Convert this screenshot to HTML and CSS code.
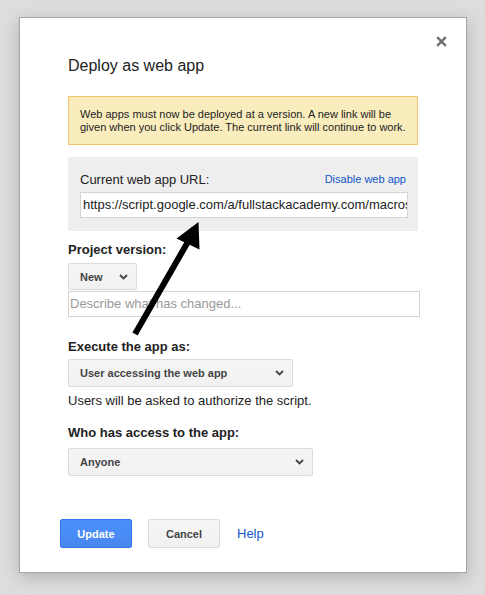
FILE: index.html
```html
<!DOCTYPE html>
<html>
<head>
<meta charset="utf-8">
<link rel="stylesheet" href="styles.css">
</head>
<body>
<div class="dialog">
  <svg class="close" viewBox="0 0 11 11" width="11" height="11"><path d="M1.2 1.2L9.8 9.8M9.8 1.2L1.2 9.8" stroke="#6f6f6f" stroke-width="2.4" fill="none"/></svg>
  <div class="content">
    <h1 class="title">Deploy as web app</h1>
    <div class="notice">Web apps must now be deployed at a version. A new link will be given when you click Update. The current link will continue to work.</div>
    <div class="urlbox">
      <div class="urlhead">
        <span class="urllabel">Current web app URL:</span>
        <a class="disable">Disable web app</a>
      </div>
      <div class="urlfield">https://script.google.com/a/fullstackacademy.com/macros/s/AKfycbx/exec</div>
    </div>
    <div class="label first">Project version:</div>
    <div class="select sel-new"><span>New</span><svg class="chev" viewBox="0 0 9 6" width="9" height="6"><path d="M1 1L4.5 4.5L8 1" stroke="#444" stroke-width="1.8" fill="none"/></svg></div>
    <div class="textinput">Describe what has changed...</div>
    <div class="label exec">Execute the app as:</div>
    <div class="select sel-exec"><span>User accessing the web app</span><svg class="chev" viewBox="0 0 9 6" width="9" height="6"><path d="M1 1L4.5 4.5L8 1" stroke="#444" stroke-width="1.8" fill="none"/></svg></div>
    <div class="hint">Users will be asked to authorize the script.</div>
    <div class="label who">Who has access to the app:</div>
    <div class="select sel-who"><span>Anyone</span><svg class="chev" viewBox="0 0 9 6" width="9" height="6"><path d="M1 1L4.5 4.5L8 1" stroke="#444" stroke-width="1.8" fill="none"/></svg></div>
    <div class="footer">
      <button class="btn primary">Update</button>
      <button class="btn">Cancel</button>
      <a class="help">Help</a>
    </div>
  </div>
</div>
<svg class="arrow" width="485" height="595" viewBox="0 0 485 595">
  <line x1="135" y1="334" x2="189" y2="240" stroke="#000" stroke-width="6"/>
  <polygon points="198.5,222 176.5,238.5 199.5,249.5" fill="#000"/>
</svg>
</body>
</html>
```
FILE: styles.css
```css
html, body {
  margin: 0;
  padding: 0;
}
body {
  background: #dddddd;
  width: 485px;
  height: 595px;
  overflow: hidden;
  padding: 17px 0 0 19px;
  box-sizing: border-box;
  font-family: Arial, "Liberation Sans", sans-serif;
  color: #222;
  position: relative;
}
.dialog {
  position: relative;
  box-sizing: border-box;
  width: 448px;
  height: 556px;
  background: #fff;
  border: 1px solid #a6a6a6;
  box-shadow: 0 4px 16px rgba(0, 0, 0, 0.2);
}
.close {
  position: absolute;
  top: 18px;
  right: 19px;
  display: block;
}
.content {
  padding: 39px 0 0 48px;
}
.title {
  margin: 0;
  font-size: 16px;
  font-weight: normal;
  line-height: 18px;
  color: #222;
}
.notice {
  margin-top: 21px;
  width: 350px;
  box-sizing: border-box;
  background: #f9edbe;
  border: 1px solid #f0c36d;
  padding: 11px 8px 10px 11px;
  font-size: 11px;
  line-height: 13px;
  color: #222;
}
.urlbox {
  margin-top: 12px;
  width: 350px;
  box-sizing: border-box;
  background: #eeeeee;
  padding: 15px 10px 13px 12px;
}
.urlhead {
  display: flex;
  justify-content: space-between;
  align-items: center;
  height: 16px;
  margin-bottom: 4px;
}
.urllabel {
  font-size: 13px;
  line-height: 16px;
}
.disable {
  font-size: 11px;
  color: #1155cc;
  margin-top: -3px;
  margin-right: 2px;
}
.urlfield {
  height: 26px;
  box-sizing: border-box;
  background: #fff;
  border: 1px solid #d4d4d4;
  font-size: 13px;
  line-height: 24px;
  padding-left: 2px;
  white-space: nowrap;
  overflow: hidden;
  color: #222;
}
.label {
  font-size: 13px;
  font-weight: bold;
  line-height: 16px;
  color: #222;
}
.label.first { margin-top: 11px; }
.label.exec { margin-top: 22px; }
.label.who { margin-top: 16px; }
.select {
  box-sizing: border-box;
  display: flex;
  align-items: center;
  justify-content: space-between;
  background: linear-gradient(#f5f5f5, #f1f1f1);
  border: 1px solid #dcdcdc;
  border-radius: 2px;
  font-size: 11px;
  font-weight: bold;
  color: #444;
  padding: 0 8px 0 11px;
}
.sel-new {
  margin-top: 5px;
  width: 69px;
  height: 27px;
}
.sel-exec {
  margin-top: 4px;
  width: 225px;
  height: 28px;
}
.sel-who {
  margin-top: 7px;
  width: 245px;
  height: 28px;
}
.chev { display: block; }
.textinput {
  margin-top: 1px;
  width: 352px;
  height: 26px;
  box-sizing: border-box;
  border: 1px solid #d4d4d4;
  font-size: 13px;
  line-height: 24px;
  padding-left: 1px;
  color: #999;
}
.hint {
  margin-top: 6px;
  font-size: 13px;
  line-height: 16px;
  color: #222;
}
.footer {
  margin-top: 43px;
  margin-left: -8px;
  display: flex;
  align-items: center;
}
.btn {
  box-sizing: border-box;
  width: 72px;
  height: 29px;
  border-radius: 2px;
  border: 1px solid #dcdcdc;
  background: linear-gradient(#f5f5f5, #f1f1f1);
  color: #444;
  font-family: Arial, "Liberation Sans", sans-serif;
  font-size: 11px;
  font-weight: bold;
  padding: 0;
  margin-right: 16px;
}
.btn.primary {
  background: linear-gradient(#4d90fe, #4787ed);
  border-color: #3079ed;
  color: #fff;
}
.help {
  font-size: 13px;
  color: #1155cc;
  margin-left: 1px;
}
.arrow {
  position: absolute;
  left: 0;
  top: 0;
  pointer-events: none;
}
```
